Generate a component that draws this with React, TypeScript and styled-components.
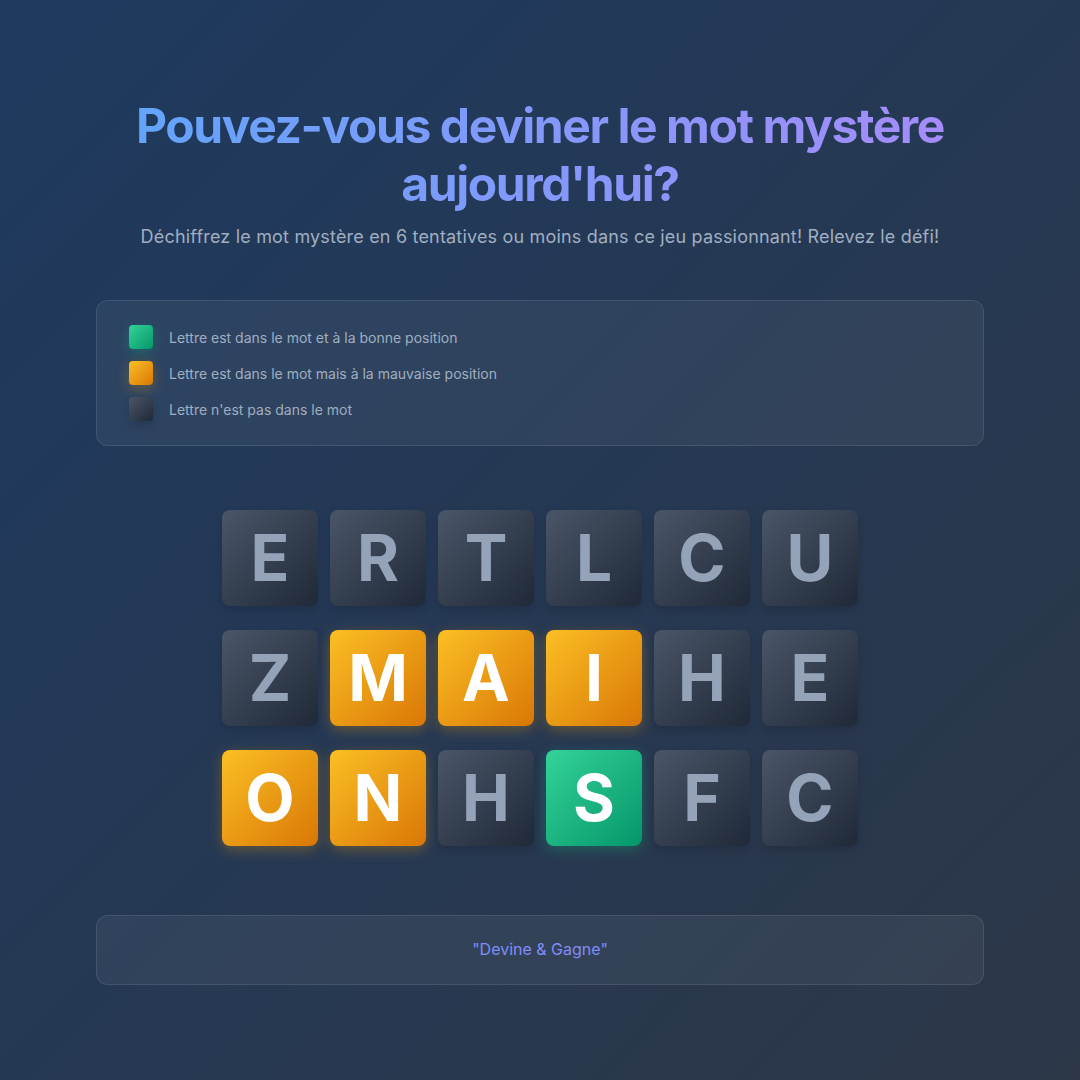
import React from "react";
import styled, { createGlobalStyle, css } from "styled-components";

type Status = "correct" | "present" | "absent";

const GlobalStyle = createGlobalStyle`
  * { box-sizing: border-box; }
  html, body {
    margin: 0;
    padding: 0;
  }
  body {
    min-height: 100vh;
    font-family: Inter, "Noto Sans", sans-serif;
    background: linear-gradient(135deg, #1e3a5f 0%, #2d3748 100%);
    background-attachment: fixed;
  }
`;

const Page = styled.main`
  width: 888px;
  margin: 0 auto;
  padding: 97px 0 96px;
  display: flex;
  flex-direction: column;
  align-items: center;
`;

const Header = styled.header`
  text-align: center;
  margin-bottom: 50px;
`;

const Title = styled.h1`
  margin: 0 0 11px;
  font-size: 48px;
  font-weight: 700;
  line-height: 1.2;
  letter-spacing: -0.03em;
  background: linear-gradient(90deg, #60a5fa 0%, #a78bfa 100%);
  -webkit-background-clip: text;
  background-clip: text;
  color: transparent;
`;

const Subtitle = styled.p`
  margin: 0;
  font-size: 18px;
  line-height: 1.5;
  letter-spacing: 0.01em;
  color: #a0aec0;
`;

const Panel = styled.section`
  width: 100%;
  background: rgba(255, 255, 255, 0.05);
  border: 1px solid rgba(255, 255, 255, 0.1);
  border-radius: 12px;
`;

const Legend = styled(Panel)`
  padding: 24px 32px;
  display: flex;
  flex-direction: column;
  gap: 12px;
  margin-bottom: 64px;
`;

const LegendRow = styled.div`
  display: flex;
  align-items: center;
  gap: 16px;
  font-size: 14px;
  color: #a0aec0;
`;

const fills: Record<Status, ReturnType<typeof css>> = {
  correct: css`
    background: linear-gradient(135deg, #34d399 0%, #059669 100%);
    color: #ffffff;
    box-shadow: 0 4px 14px rgba(16, 185, 129, 0.3);
  `,
  present: css`
    background: linear-gradient(135deg, #fbbf24 0%, #d97706 100%);
    color: #ffffff;
    box-shadow: 0 4px 14px rgba(245, 158, 11, 0.3);
  `,
  absent: css`
    background: linear-gradient(135deg, #4a5568 0%, #1f2937 100%);
    color: #94a3b8;
    box-shadow: 0 4px 8px rgba(0, 0, 0, 0.15);
  `,
};

const Swatch = styled.span<{ $status: Status }>`
  width: 24px;
  height: 24px;
  border-radius: 4px;
  flex-shrink: 0;
  ${({ $status }) => fills[$status]}
`;

const Board = styled.div`
  display: flex;
  flex-direction: column;
  gap: 24px;
  margin-bottom: 69px;
`;

const BoardRow = styled.div`
  display: grid;
  grid-template-columns: repeat(6, 96px);
  gap: 12px;
`;

const Tile = styled.div<{ $status: Status }>`
  width: 96px;
  height: 96px;
  border-radius: 8px;
  display: flex;
  align-items: center;
  justify-content: center;
  font-size: 64px;
  font-weight: 700;
  line-height: 1;
  ${({ $status }) => fills[$status]}
`;

const Footer = styled(Panel)`
  padding: 21px 20px;
  text-align: center;
  font-size: 16px;
  line-height: 1.6;
  color: #818cf8;
`;

const legend: { status: Status; label: string }[] = [
  { status: "correct", label: "Lettre est dans le mot et à la bonne position" },
  { status: "present", label: "Lettre est dans le mot mais à la mauvaise position" },
  { status: "absent", label: "Lettre n'est pas dans le mot" },
];

const rows: [string, Status][][] = [
  [["E", "absent"], ["R", "absent"], ["T", "absent"], ["L", "absent"], ["C", "absent"], ["U", "absent"]],
  [["Z", "absent"], ["M", "present"], ["A", "present"], ["I", "present"], ["H", "absent"], ["E", "absent"]],
  [["O", "present"], ["N", "present"], ["H", "absent"], ["S", "correct"], ["F", "absent"], ["C", "absent"]],
];

export default function App() {
  return (
    <>
      <GlobalStyle />
      <Page>
        <Header>
          <Title>Pouvez-vous deviner le mot mystère aujourd'hui?</Title>
          <Subtitle>
            Déchiffrez le mot mystère en 6 tentatives ou moins dans ce jeu passionnant! Relevez le défi!
          </Subtitle>
        </Header>

        <Legend>
          {legend.map((item) => (
            <LegendRow key={item.status}>
              <Swatch $status={item.status} />
              {item.label}
            </LegendRow>
          ))}
        </Legend>

        <Board>
          {rows.map((row, r) => (
            <BoardRow key={r}>
              {row.map(([letter, status], c) => (
                <Tile key={c} $status={status}>
                  {letter}
                </Tile>
              ))}
            </BoardRow>
          ))}
        </Board>

        <Footer>"Devine &amp; Gagne"</Footer>
      </Page>
    </>
  );
}
